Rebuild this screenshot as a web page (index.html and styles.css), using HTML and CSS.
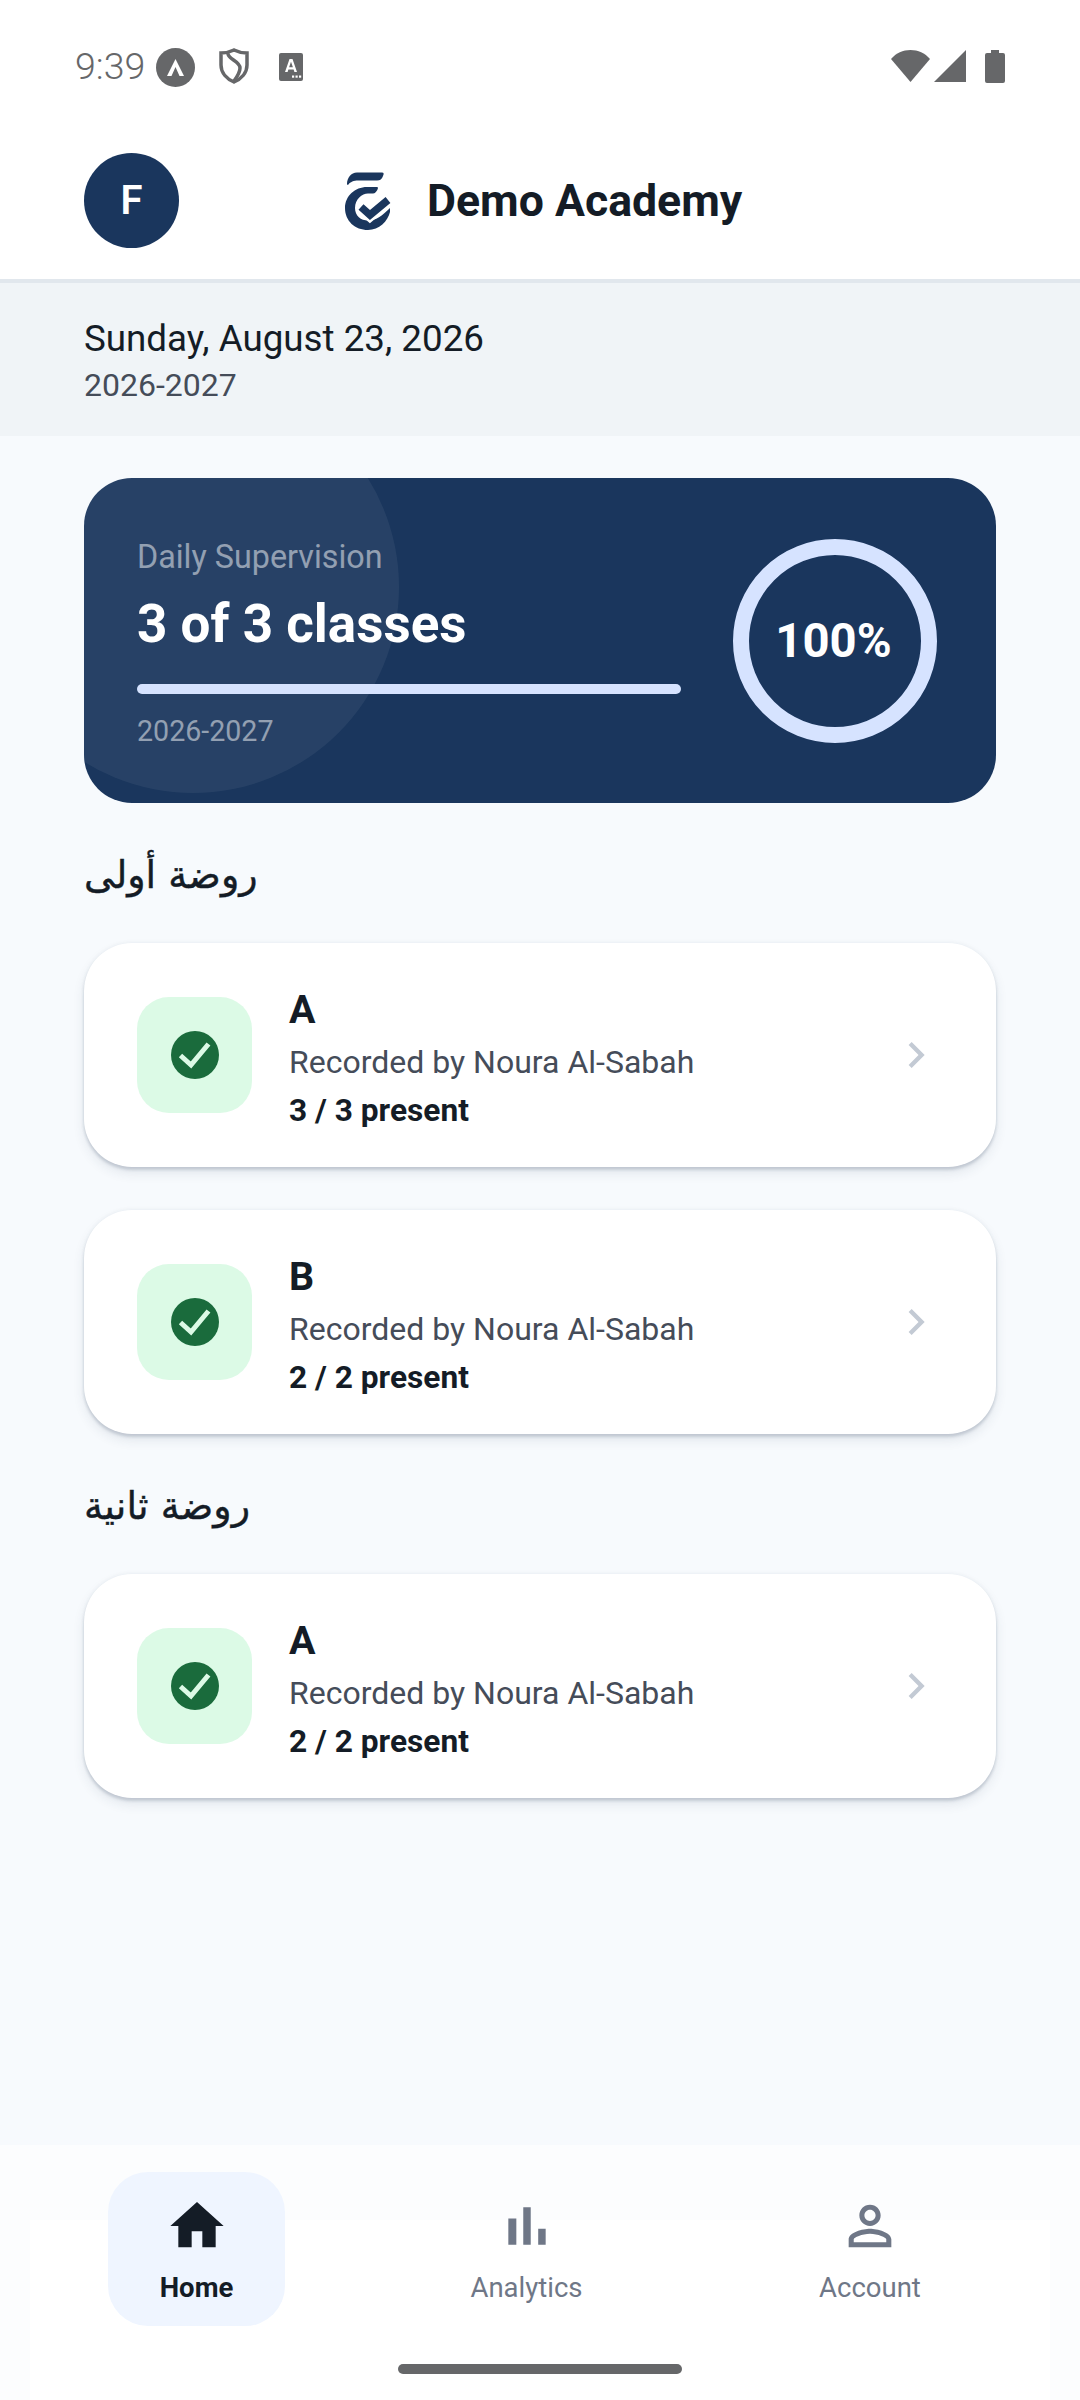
FILE: index.html
```html
<!DOCTYPE html>
<html lang="en">
<head>
  <meta charset="UTF-8">
  <meta name="viewport" content="width=device-width, initial-scale=1">
  <title>Demo Academy</title>
  <link rel="stylesheet" href="styles.css">
</head>
<body>

  <div class="status">
    <span class="time">9:39</span>
    <svg class="st-a" viewBox="0 0 39 39"><circle cx="19.5" cy="19.5" r="19.5"/><path class="white" d="M19.5 11 28 28h-4.500L19.500 19 15.500 28H11z"/></svg>
    <svg class="st-shield" viewBox="0 0 30 36"><path class="line" d="M15 2 C19 4 24 5 28 5 V17 C28 25 22 31 15 34 C8 31 2 25 2 17 V5 C6 5 11 4 15 2z"/><path class="line" d="M9 5 C8 11 21 13 21 20 C21 25 18 29 15 33"/></svg>
    <svg class="st-box" viewBox="0 0 24 28"><rect width="24" height="28" rx="2"/><path class="white" d="M10.5 6h3L18 19h-2.6l-.8-2.6H9.400L8.600 19H6zM10.100 14.300h3.800L12 8.700z"/><rect class="white" x="13" y="22.500" width="2.200" height="2.200"/><rect class="white" x="16.500" y="22.500" width="2.200" height="2.200"/><rect class="white" x="20" y="22.500" width="2.200" height="2.200"/></svg>
    <div class="status-right">
      <svg class="st-wifi" viewBox="0 0 39 32"><path d="M0 9 C5 3 12 0 19.500 0 S34 3 39 9 L19.500 32z"/></svg>
      <svg class="st-signal" viewBox="0 0 32 32"><path d="M32 0V32H0z"/></svg>
      <svg class="st-batt" viewBox="0 0 20 33"><path d="M6 0h8v3h4a2 2 0 0 1 2 2v26a2 2 0 0 1-2 2H2a2 2 0 0 1-2-2V5a2 2 0 0 1 2-2h4z"/></svg>
    </div>
  </div>

  <header>
    <div class="avatar">F</div>
    <div class="brand">
      <svg class="logo" viewBox="0 0 48 60">
        <path class="navy" d="M3 13 C3 7 7 1.500 13 1.500 H38 C40 1.500 40 3 39 5 C38 8 36 9.500 33 9.500 H14 C10 9.500 6 11 4.500 13.500 C3.500 14 3 14 3 13z"/>
        <path class="navy" d="M23 16 H33 C34.500 16 34 18 33 19.500 C32 21 31 22.500 29 22.500 H24 C18 22.500 11 28 11 37 C11 45 17 49.500 24 49.500 C32 49.500 38 45 46 37 V41 C44 50 35 59 24 59 C11 59 1 50 1 37 C1 25 11 16 23 16z"/>
        <path class="halo" d="M17 36 L26 44 L44 29"/>
        <path class="tick" d="M17 36 L26 44 L44 29"/>
      </svg>
      <span class="brand-name">Demo Academy</span>
    </div>
  </header>

  <div class="date-band">
    <div class="date">Sunday, August 23, 2026</div>
    <div class="year">2026-2027</div>
  </div>

  <main>
    <section class="hero">
      <div class="hero-text">
        <div class="hero-label">Daily Supervision</div>
        <div class="hero-count">3 of 3 classes</div>
        <div class="bar"></div>
        <div class="hero-year">2026-2027</div>
      </div>
      <div class="ring">100%</div>
    </section>

    <h2 class="group">روضة أولى</h2>

    <div class="card">
      <div class="tile"><svg class="check" viewBox="0 0 48 48"><circle cx="24" cy="24" r="24"/><path d="M9.500 24.500 20 34 37.500 13"/></svg></div>
      <div class="info">
        <div class="cls">A</div>
        <div class="by">Recorded by Noura Al-Sabah</div>
        <div class="count">3 / 3 present</div>
      </div>
      <svg class="chev" viewBox="0 0 24 24"><path d="M10 6L8.590 7.410 13.170 12l-4.580 4.590L10 18l6-6z"/></svg>
    </div>

    <div class="card">
      <div class="tile"><svg class="check" viewBox="0 0 48 48"><circle cx="24" cy="24" r="24"/><path d="M9.500 24.500 20 34 37.500 13"/></svg></div>
      <div class="info">
        <div class="cls">B</div>
        <div class="by">Recorded by Noura Al-Sabah</div>
        <div class="count">2 / 2 present</div>
      </div>
      <svg class="chev" viewBox="0 0 24 24"><path d="M10 6L8.590 7.410 13.170 12l-4.580 4.590L10 18l6-6z"/></svg>
    </div>

    <h2 class="group">روضة ثانية</h2>

    <div class="card">
      <div class="tile"><svg class="check" viewBox="0 0 48 48"><circle cx="24" cy="24" r="24"/><path d="M9.500 24.500 20 34 37.500 13"/></svg></div>
      <div class="info">
        <div class="cls">A</div>
        <div class="by">Recorded by Noura Al-Sabah</div>
        <div class="count">2 / 2 present</div>
      </div>
      <svg class="chev" viewBox="0 0 24 24"><path d="M10 6L8.590 7.410 13.170 12l-4.580 4.590L10 18l6-6z"/></svg>
    </div>
  </main>

  <nav>
    <div class="tab active">
      <svg viewBox="0 0 24 24"><path d="M10 20v-6h4v6h5v-8h3L12 3 2 12h3v8z"/></svg>
      <span>Home</span>
    </div>
    <div class="tab">
      <svg viewBox="0 0 24 24"><path d="M5 9.200h3V19H5zM10.600 5h2.800v14h-2.800zm5.600 8H19v6h-2.800z"/></svg>
      <span>Analytics</span>
    </div>
    <div class="tab">
      <svg viewBox="0 0 24 24"><path d="M12 5.900c1.160 0 2.100.94 2.100 2.100s-.94 2.100-2.100 2.100S9.900 9.160 9.900 8s.94-2.100 2.100-2.100m0 9c2.970 0 6.100 1.460 6.100 2.100v1.100H5.900V17c0-.64 3.130-2.100 6.100-2.100M12 4C9.790 4 8 5.790 8 8s1.790 4 4 4 4-1.790 4-4-1.790-4-4-4zm0 9c-2.670 0-8 1.340-8 4v3h16v-3c0-2.660-5.330-4-8-4z"/></svg>
      <span>Account</span>
    </div>
    <div class="home-pill"></div>
  </nav>

</body>
</html>
```

FILE: styles.css
```css
:root {
  --navy: #1a365d;
  --ink: #141c26;
  --grey: #666769;
  --sub: #454c59;
  --muted: #6f7787;
  --light-blue: #d6e3ff;
}
* { box-sizing: border-box; }
html, body { height: 100%; }
body {
  margin: 0;
  width: 1080px;
  height: 2400px;
  display: flex;
  flex-direction: column;
  overflow: hidden;
  font-family: Roboto, "Noto Sans", sans-serif;
  background: #f7fafd;
  color: var(--ink);
}

/* status bar */
.status {
  height: 132px;
  flex: none;
  display: flex;
  align-items: center;
  padding: 0 75px;
  background: #fff;
  color: var(--grey);
}
.status svg { display: block; fill: var(--grey); flex: none; }
.status .white { fill: #fff; }
.status .line { fill: none; stroke: var(--grey); stroke-width: 3.5; }
.time { font-size: 37.500px; font-weight: 300; width: 81px; }
.st-a { width: 39px; height: 39px; margin-top: 2px; }
.st-shield { width: 30px; height: 36px; margin-left: 24px; }
.st-box { width: 24px; height: 28px; margin: 2px 0 0 30px; }
.status-right {
  margin-left: auto;
  display: flex;
  align-items: center;
}
.st-wifi { width: 39px; height: 32px; }
.st-signal { width: 32px; height: 32px; margin-left: 4px; }
.st-batt { width: 20px; height: 33px; margin-left: 19px; }

/* header */
header {
  height: 151px;
  flex: none;
  display: flex;
  align-items: center;
  padding: 21px 84px 31px;
  background: #fff;
  border-bottom: 4px solid #e1e7ed;
}
.avatar {
  width: 95px;
  height: 95px;
  border-radius: 50%;
  flex: none;
  display: flex;
  align-items: center;
  justify-content: center;
  background: var(--navy);
  color: #fff;
  font-size: 40px;
  font-weight: 600;
}
.brand {
  margin-left: 165px;
  display: flex;
  align-items: center;
}
.logo { width: 48px; height: 60px; display: block; }
.logo .navy { fill: var(--navy); }
.logo .halo { fill: none; stroke: #fff; stroke-width: 12.500; }
.logo .tick { fill: none; stroke: var(--navy); stroke-width: 7.5; }
.brand-name { margin-left: 35px; font-size: 44.6px; font-weight: 700; }

/* date */
.date-band {
  height: 153px;
  flex: none;
  padding: 34px 84px 0;
  background: #f0f4f7;
}
.date { font-size: 36.750px; line-height: 44px; }
.year { font-size: 32px; line-height: 40px; margin-top: 4px; color: var(--sub); }

/* content */
main {
  flex: 1;
  display: flex;
  flex-direction: column;
  gap: 43px;
  padding: 42px 84px 0;
}
.hero {
  height: 325px;
  flex: none;
  position: relative;
  overflow: hidden;
  display: flex;
  align-items: center;
  justify-content: space-between;
  padding: 0 59px 0 53px;
  border-radius: 48px;
  background: var(--navy);
  color: #fff;
}
.hero::before {
  content: "";
  position: absolute;
  left: -97px;
  top: -97px;
  width: 412px;
  height: 412px;
  border-radius: 50%;
  background: rgba(255,255,255,.06);
}
.hero-text { position: relative; width: 544px; margin-top: 4px; }
.hero-label { font-size: 32.300px; line-height: 40px; color: rgba(255,255,255,.5); }
.hero-count { font-size: 53px; line-height: 60px; font-weight: 700; margin-top: 17px; }
.bar { height: 10px; border-radius: 5px; margin-top: 30px; background: var(--light-blue); }
.hero-year { font-size: 28.600px; line-height: 36px; margin-top: 19px; color: rgba(255,255,255,.5); }
.ring {
  width: 204px;
  height: 204px;
  flex: none;
  position: relative;
  display: flex;
  align-items: center;
  justify-content: center;
  padding-right: 3px;
  border: 16px solid var(--light-blue);
  border-radius: 50%;
  font-size: 47.250px;
  font-weight: 700;
}

.group {
  margin: 0;
  height: 54px;
  flex: none;
  font-size: 38px;
  line-height: 58px;
  font-weight: 400;
  font-family: "DejaVu Sans", sans-serif;
  -webkit-text-stroke: .4px var(--ink);
}
.card {
  height: 224px;
  flex: none;
  display: flex;
  align-items: center;
  padding: 0 53px;
  border-radius: 48px;
  background: #fff;
  box-shadow: 0 3px 3px rgba(40,60,90,.17), 0 6px 12px rgba(40,60,90,.1), 0 0 4px rgba(40,60,90,.06);
}
.tile {
  width: 115px;
  height: 116px;
  flex: none;
  display: flex;
  align-items: center;
  justify-content: center;
  border-radius: 32px;
  background: #dcfae6;
}
.check { width: 48px; height: 48px; display: block; }
.check circle { fill: #1a6b3c; }
.check path { fill: none; stroke: #dcfae6; stroke-width: 5; }
.info { flex: 1; margin-left: 37px; padding-top: 9px; }
.cls { font-size: 39.4px; line-height: 46px; font-weight: 700; }
.by { font-size: 32px; line-height: 42px; margin-top: 8px; color: var(--sub); }
.count { font-size: 31.700px; line-height: 42px; margin-top: 7px; font-weight: 700; }
.chev { width: 52px; height: 52px; flex: none; fill: #c3cad4; display: block; margin: 0 1px 0 -1px; }

/* bottom nav */
nav {
  height: 255px;
  flex: none;
  position: relative;
  display: flex;
  align-items: flex-start;
  justify-content: space-between;
  padding: 27px 108px 0;
  background: #fcfdfe;
}
nav::before {
  content: "";
  position: absolute;
  left: 30px;
  right: 30px;
  top: 75px;
  bottom: 0;
  background: #fff;
}
.tab {
  position: relative;
  width: 204px;
  height: 154px;
  padding-top: 22px;
  display: flex;
  flex-direction: column;
  align-items: center;
  border-radius: 40px;
  color: var(--muted);
  font-size: 27.500px;
}
.tab svg { width: 64px; height: 64px; display: block; fill: currentColor; }
.tab span { margin-top: 14px; line-height: 32px; }
.tab.active {
  width: 177px;
  background: #eff5ff;
  color: var(--ink);
  font-weight: 700;
}
.tab:nth-child(2) { width: 217px; }
.home-pill {
  position: absolute;
  left: 398px;
  top: 219px;
  width: 284px;
  height: 10px;
  border-radius: 5px;
  background: var(--grey);
}
```
